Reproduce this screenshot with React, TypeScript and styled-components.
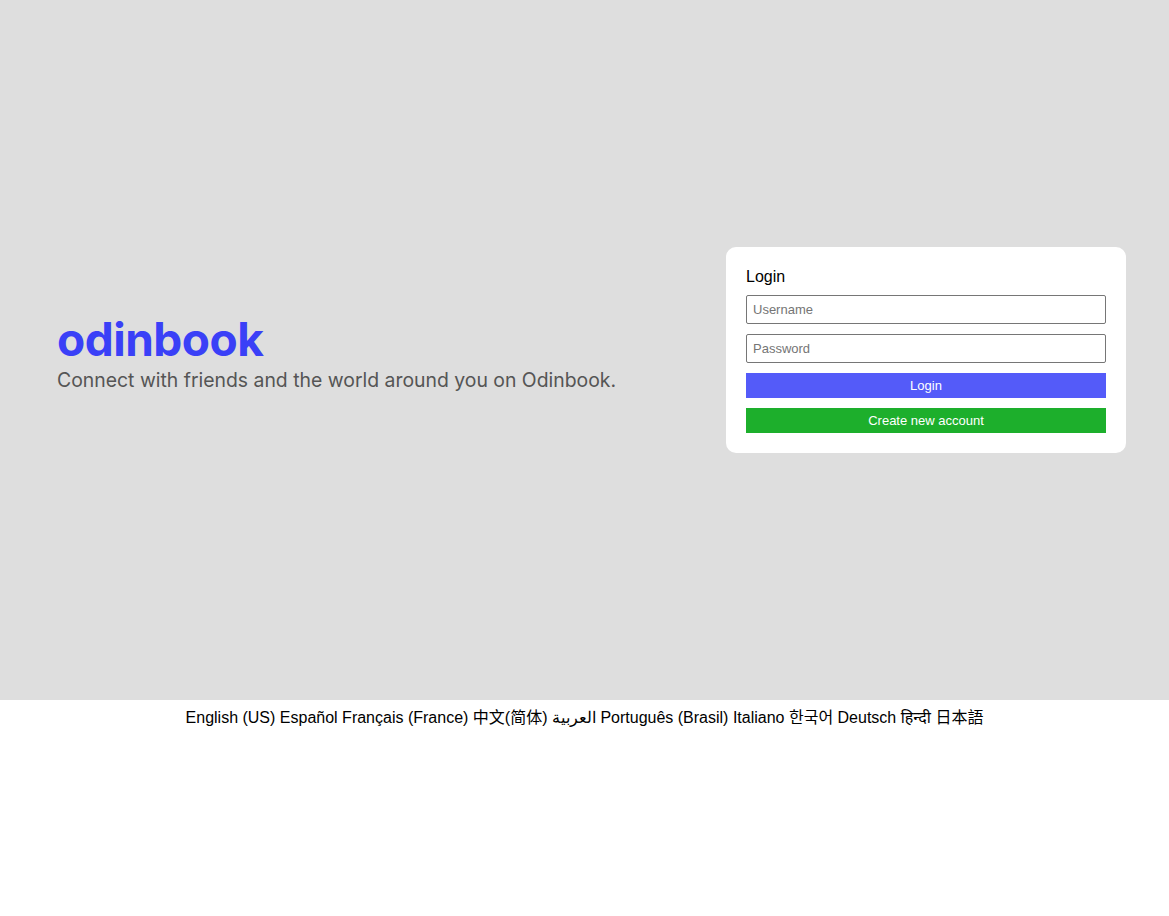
import React from "react";
import styled, { createGlobalStyle } from "styled-components";

const GlobalStyle = createGlobalStyle`
  html, body { margin: 0; padding: 0; background: #ffffff; }
  body { font-family: "Liberation Sans", Arial, sans-serif; color: #000; }
  * { box-sizing: border-box; }
`;

const Hero = styled.main`
  height: 700px;
  background: #dedede;
  display: flex;
  align-items: center;
  justify-content: space-between;
  padding: 0 43px 0 57px;
`;

const Brand = styled.section`
  display: flex;
  flex-direction: column;
  margin-top: 8px;
`;

const Logo = styled.h1`
  margin: 0 0 6px;
  font-family: Inter, Arial, sans-serif;
  font-weight: 700;
  font-size: 46px;
  line-height: 46px;
  letter-spacing: -0.5px;
  color: #3a40f7;
`;

const Tagline = styled.p`
  margin: 0;
  font-family: Inter, Arial, sans-serif;
  font-size: 19.4px;
  line-height: 24px;
  color: #555555;
`;

const Card = styled.form`
  width: 400px;
  background: #ffffff;
  border-radius: 10px;
  padding: 20px;
  display: flex;
  flex-direction: column;
  gap: 10px;
`;

const CardTitle = styled.div`
  font-family: "Liberation Sans", Arial, sans-serif;
  font-size: 16px;
  line-height: 18px;
  padding-top: 1px;
  margin-bottom: -1px;
  color: #000;
`;

const Field = styled.input`
  width: 100%;
  height: 29px;
  border: 1px solid #767676;
  border-radius: 2px;
  padding: 0 6px;
  font-family: "Liberation Sans", Arial, sans-serif;
  font-size: 13px;
  color: #000;
  background: #fff;
  &::placeholder { color: #757575; }
`;

const Button = styled.button<{ $bg: string }>`
  width: 100%;
  height: 25px;
  border: none;
  background: ${(p) => p.$bg};
  color: #ffffff;
  font-family: "Liberation Sans", Arial, sans-serif;
  font-size: 13px;
  padding: 0;
  cursor: pointer;
`;

const Footer = styled.footer`
  text-align: center;
  padding-top: 8px;
  font-family: "Liberation Sans", Arial, "Noto Sans", "Noto Sans CJK SC", sans-serif;
  font-size: 16px;
  line-height: 20px;
  color: #000;
`;

const languages = [
  "English (US)",
  "Español",
  "Français (France)",
  "中文(简体)",
  "العربية",
  "Português (Brasil)",
  "Italiano",
  "한국어",
  "Deutsch",
  "हिन्दी",
  "日本語",
];

export default function App() {
  return (
    <>
      <GlobalStyle />
      <Hero>
        <Brand>
          <Logo>odinbook</Logo>
          <Tagline>Connect with friends and the world around you on Odinbook.</Tagline>
        </Brand>
        <Card onSubmit={(e) => e.preventDefault()}>
          <CardTitle>Login</CardTitle>
          <Field placeholder="Username" />
          <Field placeholder="Password" type="password" />
          <Button $bg="#545bf9" type="submit">Login</Button>
          <Button $bg="#1daf2c" type="button">Create new account</Button>
        </Card>
      </Hero>
      <Footer>
        {languages.map((l, i) => (
          <React.Fragment key={l}>
            {i > 0 ? " " : ""}
            <span>{l}</span>
          </React.Fragment>
        ))}
      </Footer>
    </>
  );
}
